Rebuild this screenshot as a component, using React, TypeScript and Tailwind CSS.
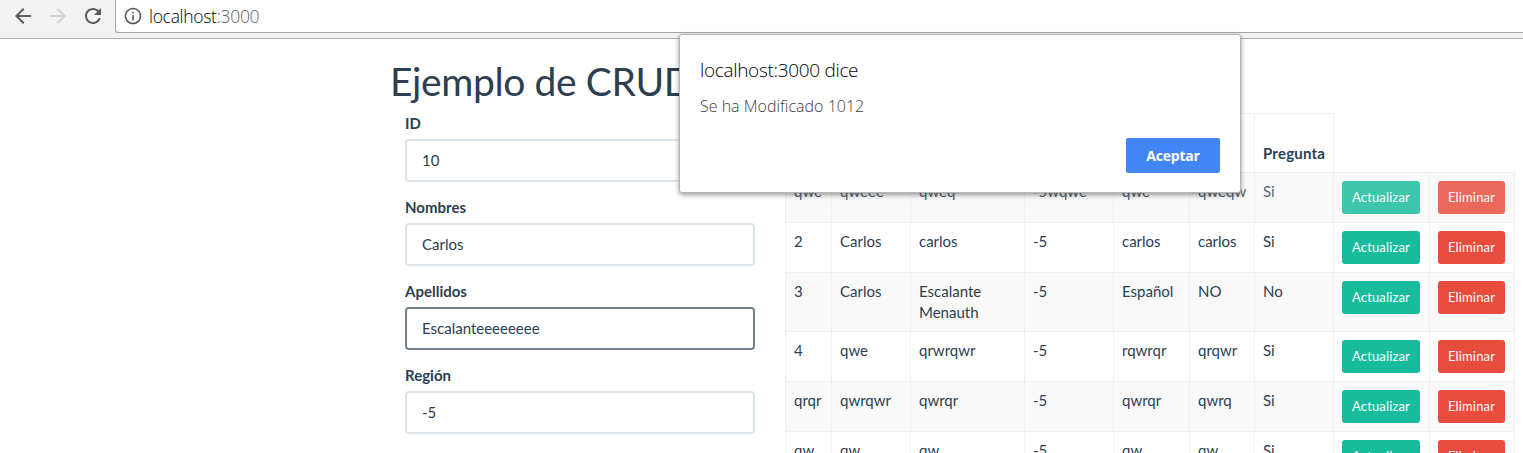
import React from "react";

type Row = { cells: string[]; faded?: boolean };

const rows: Row[] = [
  { cells: ["qwe", "qweee", "qweq", "-5wqwe", "qwe", "qweqw", "Si"], faded: true },
  { cells: ["2", "Carlos", "carlos", "-5", "carlos", "carlos", "Si"] },
  { cells: ["3", "Carlos", "Escalante Menauth", "-5", "Español", "NO", "No"] },
  { cells: ["4", "qwe", "qrwrqwr", "-5", "rqwrqr", "qrqwr", "Si"] },
  { cells: ["qrqr", "qwrqwr", "qwrqr", "-5", "qwrqr", "qwrq", "Si"] },
  { cells: ["qw", "qw", "qw", "-5", "qw", "qw", "Si"] },
];

const fields = [
  { label: "ID", value: "10" },
  { label: "Nombres", value: "Carlos" },
  { label: "Apellidos", value: "Escalanteeeeeeee", focused: true },
  { label: "Región", value: "-5" },
];

const columns = ["w-[47px]", "w-[79px]", "w-[114px]", "w-[89px]", "w-[76px]", "w-[65px]", "w-[79px]", "w-[96px]", "w-[85px]"];

function Icon({ d, className }: { d: string; className: string }) {
  return (
    <svg viewBox="0 0 24 24" className={className} fill="currentColor">
      <path d={d} />
    </svg>
  );
}

function Toolbar() {
  return (
    <header className="flex h-[39px] border-b border-[#b0b0b0] bg-[#f2f2f2]">
      <div className="flex w-[115px] shrink-0 items-start pt-1 pl-[11px] text-[#5a5a5a]">
        <Icon className="size-6" d="M20 11H7.83l5.59-5.59L12 4l-8 8 8 8 1.41-1.41L7.83 13H20v-2z" />
        <Icon className="ml-[11px] size-6 text-[#d2d2d2]" d="M12 4l-1.41 1.41L16.17 11H4v2h12.17l-5.58 5.59L12 20l8-8z" />
        <Icon className="ml-[11px] size-6" d="M17.65 6.35C16.2 4.9 14.21 4 12 4c-4.42 0-7.99 3.58-7.99 8s3.57 8 7.99 8c3.73 0 6.84-2.55 7.73-6h-2.08c-.82 2.33-3.04 4-5.65 4-3.31 0-6-2.69-6-6s2.69-6 6-6c1.66 0 3.14.69 4.22 1.78L13 11h7V4l-2.35 2.35z" />
      </div>
      <div className="flex h-[33px] flex-1 items-center rounded-bl-[3px] border-b border-l border-[#a6a6a6] bg-white pl-[7px]">
        <Icon className="size-5 text-[#5a5a5a]" d="M11 7h2v2h-2zm0 4h2v6h-2zm1-9C6.48 2 2 6.48 2 12s4.48 10 10 10 10-4.48 10-10S17.52 2 12 2zm0 18c-4.41 0-8-3.59-8-8s3.59-8 8-8 8 3.59 8 8-3.59 8-8 8z" />
        <span className="ml-[6px] font-['Open_Sans','Noto_Sans',sans-serif] text-[17.5px] leading-6 font-light tracking-[-0.3px] text-black">
          localhost<span className="text-[#606060]">:3000</span>
        </span>
      </div>
    </header>
  );
}

function CrudForm() {
  return (
    <form className="w-[350px] shrink-0">
      {fields.map((f) => (
        <div key={f.label} className="mb-[15px]">
          <label className="mb-[5px] block h-[21px] font-bold">{f.label}</label>
          <div className={`flex h-[43px] items-center rounded-[4px] border-2 bg-white px-[15px] ${f.focused ? "border-[#75818c]" : "border-[#dce4ec]"}`}>
            {f.value}
          </div>
        </div>
      ))}
    </form>
  );
}

function CrudTable() {
  return (
    <table className="w-[730px] shrink-0 table-fixed border-separate border-spacing-0 text-left leading-[21px]">
      <colgroup>
        {columns.map((c, i) => (
          <col key={i} className={c} />
        ))}
      </colgroup>
      <thead>
        <tr className="h-[60px]">
          {["", "", "", "", "", "", "Pregunta"].map((h, i) => (
            <th key={i} className="border-t border-r border-b border-[#ecf0f1] px-2 pb-2 align-bottom font-bold tracking-[0.2px] first:border-l">
              {h}
            </th>
          ))}
          <th className="border-b border-[#ecf0f1]" />
          <th className="border-b border-[#ecf0f1]" />
        </tr>
      </thead>
      <tbody>
        {rows.map((r, i) => (
          <tr key={i} className="h-[50px] odd:bg-[#f9f9f9]">
            {r.cells.map((c, j) => (
              <td key={j} className="border-r border-b border-[#ecf0f1] p-2 align-top first:border-l">
                <div className={r.faded ? "opacity-80" : ""}>{c}</div>
              </td>
            ))}
            {["Actualizar", "Eliminar"].map((b, j) => (
              <td key={b} className="border-r border-b border-[#ecf0f1] p-2 align-top">
                <button
                  type="button"
                  className={`block h-[33px] rounded-[3px] text-[13px] leading-[33px] tracking-[0.15px] text-white ${j === 0 ? "w-[78px] bg-[#18bc9c]" : "w-[67px] bg-[#e74c3c]"} ${r.faded ? "opacity-[0.83]" : ""}`}
                >
                  {b}
                </button>
              </td>
            ))}
          </tr>
        ))}
      </tbody>
    </table>
  );
}

function AlertDialog() {
  return (
    <div
      role="alertdialog"
      className="absolute top-[34px] left-[679px] flex h-[159px] w-[562px] flex-col rounded-[3px] border border-[#b4b4b4] bg-white pt-[22px] pr-5 pl-5 font-['Open_Sans','Noto_Sans',sans-serif] shadow-[0_2px_5px_rgba(0,0,0,0.4)]"
    >
      <h2 className="text-[19px] leading-[26px] font-light tracking-[-0.32px] whitespace-nowrap text-black">
        <span>localhost:3000 dice</span>
      </h2>
      <p className="mt-[12px] text-[16px] leading-[22px] font-light whitespace-nowrap text-[#404040]">
        <span>Se ha Modificado 1012</span>
      </p>
      <button type="button" className="mt-[21px] h-[35px] w-[94px] self-end rounded-[2px] bg-[#4285f4] text-[14px] font-bold tracking-[-0.2px] text-white">
        Aceptar
      </button>
    </div>
  );
}

export default function App() {
  return (
    <div className="relative h-[453px] w-[1523px] overflow-hidden bg-white font-[Lato,sans-serif] text-[15px] leading-[21.43px] text-[#2c3e50]">
      <Toolbar />
      <main className="pt-[21px] pl-[390px]">
        <h1 className="h-[53px] text-[39px] leading-[43px] tracking-[-0.38px] whitespace-nowrap">Ejemplo de CRUD</h1>
        <div className="flex items-start gap-[30px] pl-[15px]">
          <CrudForm />
          <CrudTable />
        </div>
      </main>
      <AlertDialog />
    </div>
  );
}
